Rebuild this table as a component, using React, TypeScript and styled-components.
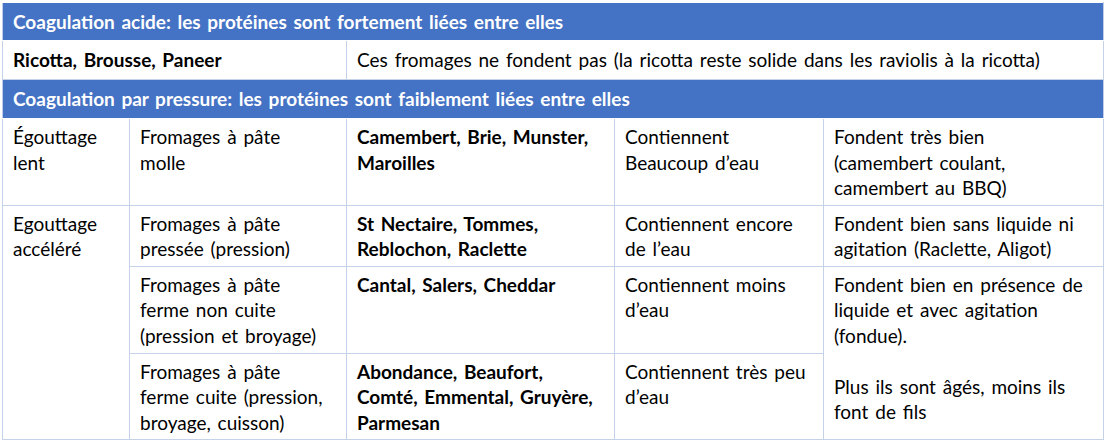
import styled, { createGlobalStyle } from "styled-components";

const GlobalStyle = createGlobalStyle`
  html, body {
    margin: 0;
    padding: 0;
    background: #ffffff;
  }
  body {
    font-family: Lato, "Open Sans", "Liberation Sans", sans-serif;
    color: #000;
  }
`;

const Page = styled.div`
  width: 1105px;
  height: 447px;
  padding: 2px 0 0 2px;
  box-sizing: border-box;
`;

const Table = styled.table`
  width: 1101px;
  table-layout: fixed;
  border-collapse: collapse;
  font-size: 19px;
  line-height: 25.5px;
  word-spacing: 2px;
`;

const Row = styled.tr<{ $h: number }>`
  height: ${(p) => p.$h}px;
`;

const HeadCell = styled.td`
  background: #4472c4;
  color: #ffffff;
  font-weight: 700;
  padding: 0 10px;
  border: 1px solid #ffffff;
  border-left-color: #bfcde8;
  border-right-color: #bfcde8;
  vertical-align: middle;
  white-space: nowrap;
`;

const Cell = styled.td<{ $bold?: boolean }>`
  border: 1px solid #c5d2ea;
  padding: 5px 10px 4px 10px;
  vertical-align: top;
  font-weight: ${(p) => (p.$bold ? 700 : 400)};
  background: #ffffff;
  white-space: nowrap;
`;

const MidCell = styled(Cell)`
  vertical-align: middle;
  padding-top: 0;
  padding-bottom: 0;
`;

const Gap = styled.span`
  display: block;
  height: 25.5px;
`;

export default function App() {
  return (
    <Page>
      <GlobalStyle />
      <Table>
        <colgroup>
          <col style={{ width: 127 }} />
          <col style={{ width: 217 }} />
          <col style={{ width: 268 }} />
          <col style={{ width: 209 }} />
          <col style={{ width: 280 }} />
        </colgroup>
        <tbody>
          <Row $h={38}>
            <HeadCell colSpan={5}>
              Coagulation acide: les protéines sont fortement liées entre elles
            </HeadCell>
          </Row>
          <Row $h={39}>
            <MidCell colSpan={2} $bold>
              Ricotta, Brousse, Paneer
            </MidCell>
            <MidCell colSpan={3}>
              Ces fromages ne fondent pas (la ricotta reste solide dans les raviolis à la ricotta)
            </MidCell>
          </Row>
          <Row $h={39}>
            <HeadCell colSpan={5}>
              Coagulation par pressure: les protéines sont faiblement liées entre elles
            </HeadCell>
          </Row>
          <Row $h={86}>
            <Cell>Égouttage<br />lent</Cell>
            <Cell>Fromages à pâte<br />molle</Cell>
            <Cell $bold>Camembert, Brie, Munster,<br />Maroilles</Cell>
            <Cell>Contiennent<br />Beaucoup d’eau</Cell>
            <Cell>
              Fondent très bien<br />(camembert coulant,<br />camembert au BBQ)
            </Cell>
          </Row>
          <Row $h={61}>
            <Cell rowSpan={3}>Egouttage<br />accéléré</Cell>
            <Cell>Fromages à pâte<br />pressée (pression)</Cell>
            <Cell $bold>St Nectaire, Tommes,<br />Reblochon, Raclette</Cell>
            <Cell>Contiennent encore<br />de l’eau</Cell>
            <Cell>Fondent bien sans liquide ni<br />agitation (Raclette, Aligot)</Cell>
          </Row>
          <Row $h={87}>
            <Cell>Fromages à pâte<br />ferme non cuite<br />(pression et broyage)</Cell>
            <Cell $bold>Cantal, Salers, Cheddar</Cell>
            <Cell>Contiennent moins<br />d’eau</Cell>
            <Cell rowSpan={2}>
              Fondent bien en présence de<br />liquide et avec agitation<br />(fondue).
              <Gap />
              Plus ils sont âgés, moins ils<br />font de fils
            </Cell>
          </Row>
          <Row $h={86}>
            <Cell>Fromages à pâte<br />ferme cuite (pression,<br />broyage, cuisson)</Cell>
            <Cell $bold>Abondance, Beaufort,<br />Comté, Emmental, Gruyère,<br />Parmesan</Cell>
            <Cell>Contiennent très peu<br />d’eau</Cell>
          </Row>
        </tbody>
      </Table>
    </Page>
  );
}
